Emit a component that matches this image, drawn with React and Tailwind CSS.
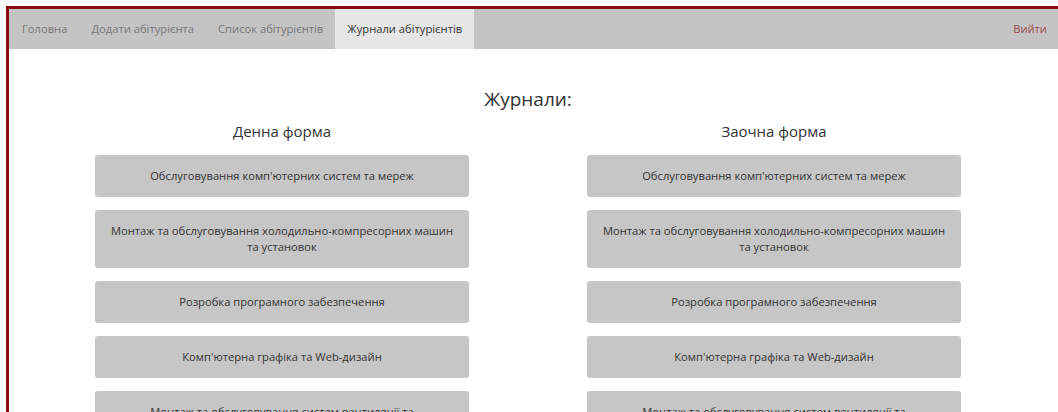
const tabs = [
  { label: "Головна", active: false },
  { label: "Додати абітурієнта", active: false },
  { label: "Список абітурієнтів", active: false },
  { label: "Журнали абітурієнтів", active: true },
];

const specialties = [
  ["Обслуговування комп'ютерних систем та мереж"],
  ["Монтаж та обслуговування холодильно-компресорних машин", "та установок"],
  ["Розробка програмного забезпечення"],
  ["Комп'ютерна графіка та Web-дизайн"],
  ["Монтаж та обслуговування систем вентиляції та", "кондиціювання повітря"],
];

function JournalColumn({ title }) {
  return (
    <div className="flex flex-col items-center">
      <h3 className="mt-[3px] mb-[14px] text-[15px] leading-[20px] text-[#333]">{title}</h3>
      <div className="flex flex-col gap-[13px]">
        {specialties.map((lines, i) => (
          <button
            key={i}
            className="w-[374px] rounded-[3px] bg-[#c6c6c6] px-[6px] py-[13px] text-center text-[11.2px] leading-[16px] whitespace-nowrap text-[#333]"
          >
            {lines.map((l, j) => (
              <span key={j} className="block h-[16px]">
                {l}
              </span>
            ))}
          </button>
        ))}
      </div>
    </div>
  );
}

export default function App() {
  return (
    <div
      className="h-[412px] overflow-hidden bg-white pt-[6px] pl-[6px]"
      style={{ fontFamily: '"Open Sans", "Noto Sans", sans-serif' }}
    >
      <div className="h-[420px] w-[1070px] border-t-[3px] border-l-[3px] border-[#8b0a0a]">
        <nav className="flex h-[40px] items-stretch bg-[#c4c4c4] pl-[1px] text-[11.2px]">
          {tabs.map((t) => (
            <a
              key={t.label}
              className={
                t.active
                  ? "flex items-center bg-[#e6e6e6] px-[12px] text-[#333]"
                  : "flex items-center px-[12px] text-[#777]"
              }
            >
              {t.label}
            </a>
          ))}
          <a className="ml-auto mr-[29px] flex items-center text-[#9a4a4c]">Вийти</a>
        </nav>
        <main className="w-[1038px] pt-[38px]">
          <h2 className="mb-[7px] text-center text-[19px] leading-[24px] text-[#333]">Журнали:</h2>
          <div className="grid grid-cols-2 px-[27px]">
            <JournalColumn title="Денна форма" />
            <JournalColumn title="Заочна форма" />
          </div>
        </main>
      </div>
    </div>
  );
}
